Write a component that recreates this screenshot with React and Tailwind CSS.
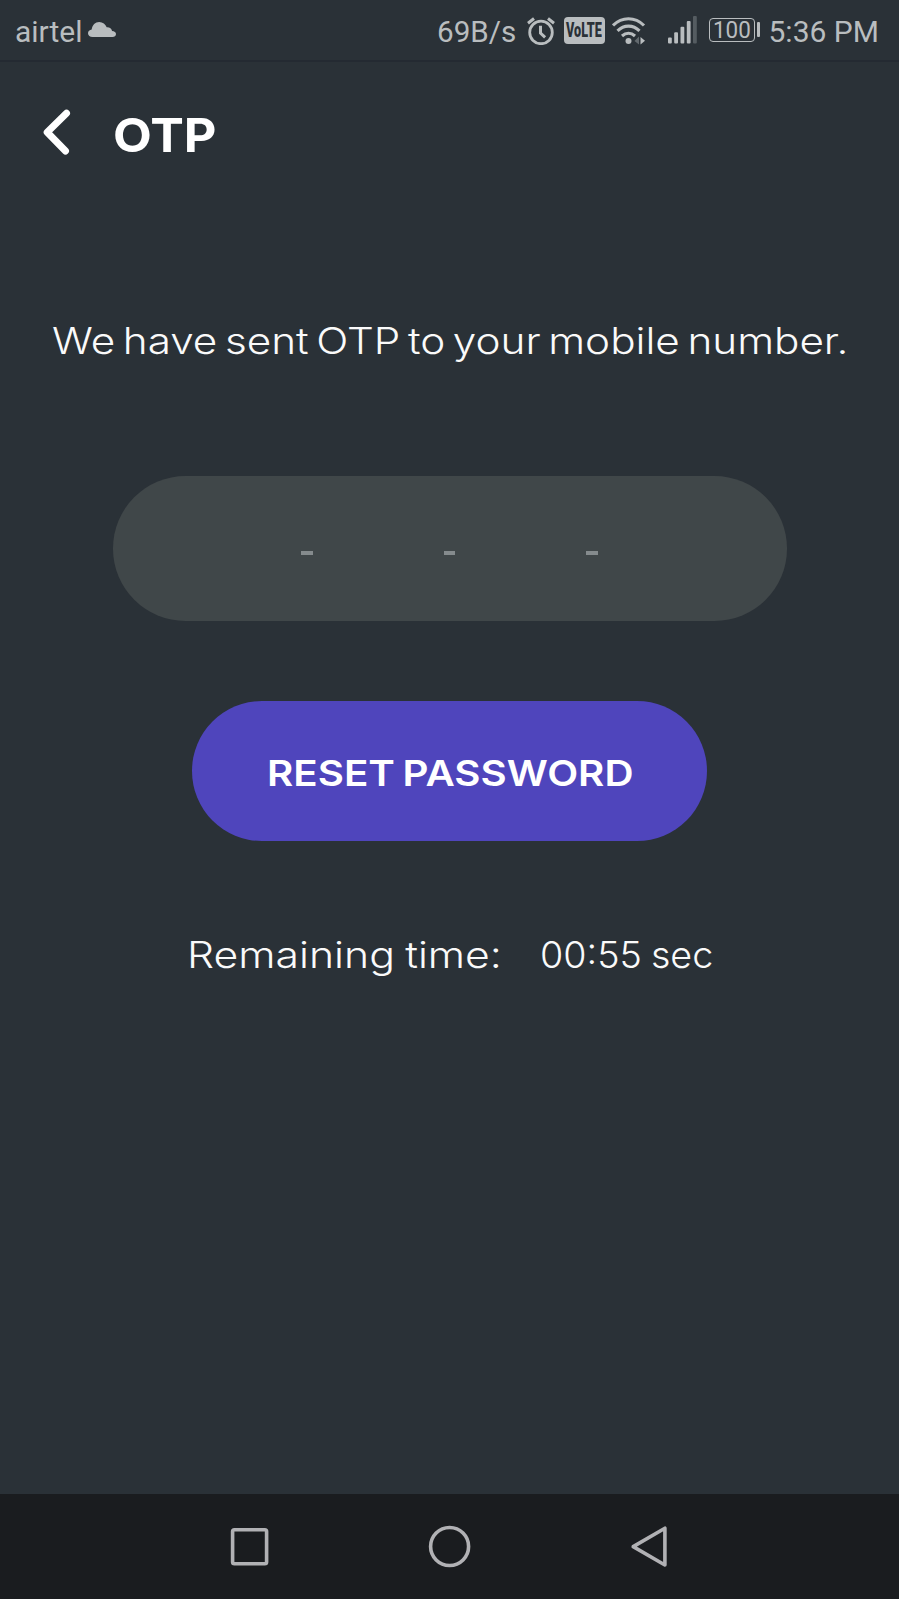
import { useLayoutEffect, useRef, useState } from "react";

// One line of text whose glyphs are stretched to fill the width of its box.
function FitText({ className, children }) {
  const box = useRef(null);
  const ink = useRef(null);
  const [scale, setScale] = useState(1);
  useLayoutEffect(() => {
    const measure = () => setScale(box.current.clientWidth / ink.current.offsetWidth);
    measure();
    document.fonts?.ready.then(() => box.current && measure());
  }, [children]);
  return (
    <span ref={box} className={`block shrink-0 whitespace-nowrap ${className}`}>
      <span ref={ink} className="inline-block origin-left" style={{ transform: `scaleX(${scale})` }}>
        {children}
      </span>
    </span>
  );
}

function StatusBar() {
  return (
    <div className="flex h-[62px] shrink-0 items-start border-b-2 border-[#242a32] pl-[15px] pt-4 font-[Roboto,sans-serif] text-[30px] leading-[32px] text-[#b9bdbf]">
      <FitText className="w-[68px]">airtel</FitText>
      <svg className="ml-[5px] shrink-0" width="28" height="28" viewBox="0 0 28 28" fill="currentColor">
        <path d="M4.500 21C2 21 0 19.400 0 17.200c0-2 1.600-3.500 3.700-3.700C4.200 9 7.300 6 11.200 6c3.600 0 6.300 2.200 7.500 5.300 2.800-.2 5 1.200 5.400 3.700 2.200.1 3.900 1.300 3.900 3 0 1.800-1.500 3-3.500 3z" />
      </svg>
      <FitText className="ml-[321px] w-[79px]">69B/s</FitText>
      <svg className="ml-[10.500px] mt-[0.500px] shrink-0" width="28" height="28" viewBox="0 0 28 28" fill="none" stroke="currentColor">
        <circle cx="14" cy="15.400" r="11.300" strokeWidth="2.800" />
        <path d="M1 6.200 7 1.500M27 6.200 21 1.500" strokeWidth="3" />
        <path d="M13.500 8.800v7.400l4.600 4.200" strokeWidth="3" />
      </svg>
      <div className="ml-[9.500px] mt-[0.500px] flex h-[27.500px] w-[40.500px] shrink-0 items-center justify-center rounded-[4px] bg-current">
        <FitText className="w-[36px] text-[20px] font-black leading-7 text-[#2a3137]">VoLTE</FitText>
      </div>
      <svg className="ml-[7px] mt-[0.500px] shrink-0" width="34" height="28" viewBox="0 0 34 28" fill="none" stroke="currentColor">
        <path d="M1 8.500C10-.5 23-.5 32 8.500M5.500 13.800c6.500-6.300 15.500-6.300 22 0M10 19c4-3.600 9-3.600 13 0" strokeWidth="3.100" />
        <circle cx="16.500" cy="24" r="3" fill="currentColor" stroke="none" />
        <path d="M27 19.500v8L22.500 24z" fill="#62696e" stroke="none" />
        <path d="M28.500 20v7.500l4.500-3.800z" fill="currentColor" stroke="none" />
      </svg>
      <svg className="ml-[22px] shrink-0" width="30" height="28" viewBox="0 0 30 28" fill="currentColor">
        <rect x="0" y="21.500" width="3.800" height="6" rx="1" />
        <rect x="6.200" y="16.300" width="3.800" height="11.200" rx="1" />
        <rect x="12.500" y="10.800" width="3.800" height="16.700" rx="1" />
        <rect x="18.800" y="5" width="3.800" height="22.500" rx="1" />
        <rect x="25" y="0" width="3.800" height="27.500" rx="1" fill="#555c61" />
      </svg>
      <div className="ml-[11px] mt-[1.500px] flex shrink-0 items-center gap-[2px]">
        <div className="flex h-[24.500px] w-[46px] items-center justify-center rounded-[4px] border-[1.500px] border-current">
          <FitText className="w-[38px] pt-[2px] text-[23px] leading-[22px]">100</FitText>
        </div>
        <div className="h-[15px] w-[3px] rounded-[1px] bg-current" />
      </div>
      <FitText className="ml-[9px] w-[110px]">5:36 PM</FitText>
    </div>
  );
}

function Header() {
  return (
    <header className="flex h-[146px] shrink-0 items-center pl-[42px]">
      <svg className="mb-[6px]" width="30" height="48" viewBox="0 0 30 48" fill="none" stroke="white" strokeWidth="7" strokeLinecap="round" strokeLinejoin="round">
        <path d="M24.500 5.300 5.200 24.300 23.500 43" />
      </svg>
      <h1 className="ml-[41px]">
        <FitText className="w-[104px] text-[47px] font-bold leading-[56px] text-white">OTP</FitText>
      </h1>
    </header>
  );
}

function NavBar() {
  return (
    <nav className="flex h-[105px] shrink-0 items-start bg-[#1a1c1f] pl-[229px] pt-[30px] text-[#b1b1b4]">
      <svg width="42" height="44" viewBox="0 0 42 44" fill="none" stroke="currentColor" strokeWidth="3.600">
        <rect x="3.600" y="5.800" width="34" height="34" rx="1.800" />
      </svg>
      <svg className="ml-[157px]" width="44" height="44" viewBox="0 0 44 44" fill="none" stroke="currentColor" strokeWidth="3.600">
        <circle cx="21.600" cy="22.500" r="19" />
      </svg>
      <svg className="ml-[158px]" width="40" height="44" viewBox="0 0 40 44" fill="none" stroke="currentColor" strokeWidth="3.600" strokeLinejoin="round">
        <path d="M34.900 4.200v36.800L3.200 22.600z" />
      </svg>
    </nav>
  );
}

export default function App() {
  return (
    <div className="flex h-[1599px] w-[899px] flex-col overflow-hidden bg-[#2a3137] font-[Inter,sans-serif] text-[#fafafa]">
      <StatusBar />
      <Header />
      <main className="flex flex-1 flex-col items-center pt-[109px]">
        <p className="pl-px">
          <FitText className="w-[796px] text-[36.500px] font-light leading-[48px] [word-spacing:-0.1em]">
            We have sent OTP to your mobile number.
          </FitText>
        </p>
        <div className="mt-[111px] flex h-[145px] w-[674px] items-center justify-center gap-[131px] rounded-full bg-[#404749] pt-[8px]">
          <span className="h-[4px] w-[11.500px] bg-[#858b8d]" />
          <span className="h-[4px] w-[11.500px] bg-[#858b8d]" />
          <span className="h-[4px] w-[11.500px] bg-[#858b8d]" />
        </div>
        <button className="mt-[80px] flex h-[140px] w-[515px] items-center justify-center rounded-full bg-[#4f45bc] pl-px pt-[4px] text-white">
          <FitText className="w-[366px] text-left text-[36px] font-semibold leading-[48px] [word-spacing:-0.06em]">RESET PASSWORD</FitText>
        </button>
        <div className="mt-[90px] flex gap-[38px] text-[37px] font-light leading-[48px]">
          <FitText className="w-[315px] [word-spacing:-0.04em]">Remaining time:</FitText>
          <FitText className="w-[173px] [word-spacing:-0.04em]">00:55 sec</FitText>
        </div>
      </main>
      <NavBar />
    </div>
  );
}
